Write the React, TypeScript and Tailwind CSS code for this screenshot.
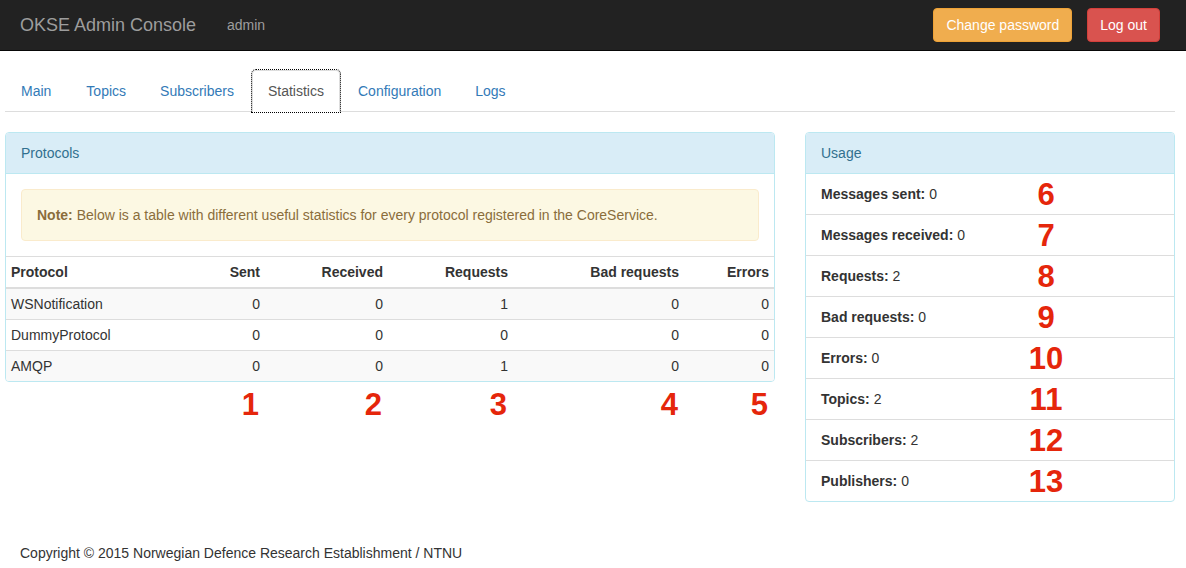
import React from "react";

const protocols = [
  { name: "WSNotification", sent: 0, received: 0, requests: 1, bad: 0, errors: 0 },
  { name: "DummyProtocol", sent: 0, received: 0, requests: 0, bad: 0, errors: 0 },
  { name: "AMQP", sent: 0, received: 0, requests: 1, bad: 0, errors: 0 },
];

const usage = [
  { label: "Messages sent:", value: 0, mark: "6" },
  { label: "Messages received:", value: 0, mark: "7" },
  { label: "Requests:", value: 2, mark: "8" },
  { label: "Bad requests:", value: 0, mark: "9" },
  { label: "Errors:", value: 0, mark: "10" },
  { label: "Topics:", value: 2, mark: "11" },
  { label: "Subscribers:", value: 2, mark: "12" },
  { label: "Publishers:", value: 0, mark: "13" },
];

const tabs = ["Main", "Topics", "Subscribers", "Statistics", "Configuration", "Logs"];

export default function App() {
  return (
    <div className="min-h-[568px] bg-white text-[14px] leading-5 text-[#333]" style={{ fontFamily: '"Liberation Sans", Arial, sans-serif' }}>
      {/* navbar */}
      <div className="flex h-[51px] items-center border-b border-[#080808] bg-[#222] pl-[20px] pr-[26px]">
        <span className="w-[207px] text-[18px] text-[#9d9d9d]">OKSE Admin Console</span>
        <span className="text-[#9d9d9d]">admin</span>
        <div className="ml-auto flex gap-[15px]">
          <button className="h-[34px] rounded-[4px] border border-[#eea236] bg-[#f0ad4e] px-[12px] text-white">Change password</button>
          <button className="h-[34px] rounded-[4px] border border-[#d43f3a] bg-[#d9534f] px-[12px] text-white">Log out</button>
        </div>
      </div>

      <div className="ml-[5px] w-[1170px]">
        {/* tabs */}
        <ul className="mt-[19px] flex border-b border-[#ddd]">
          {tabs.map((t, i) => (
            <li key={t} className={`-mb-px ${i === 0 ? "mr-[3px]" : "mr-[2px]"}`}>
              {t === "Statistics" ? (
                <span className="block rounded-t-[4px] border border-[#ddd] border-b-transparent bg-white px-[15px] py-[10px] text-[#555] outline-1 outline-dotted outline-black">
                  {t}
                </span>
              ) : (
                <span className="block border border-transparent px-[15px] py-[10px] text-[#337ab7]">{t}</span>
              )}
            </li>
          ))}
        </ul>

        <div className="mt-[20px] flex gap-[30px]">
          {/* protocols */}
          <div className="w-[770px]">
            <div className="overflow-hidden rounded-[4px] border border-[#bce8f1]">
              <div className="bg-[#d9edf7] px-[15px] py-[10px] text-[#31708f]">Protocols</div>
              <div className="border-t border-[#bce8f1] p-[15px]">
                <div className="rounded-[4px] border border-[#faebcc] bg-[#fcf8e3] p-[15px] text-[#8a6d3b]">
                  <b>Note:</b> Below is a table with different useful statistics for every protocol registered in the CoreService.
                </div>
              </div>
              <table className="w-full table-fixed border-t border-[#ddd]">
                <colgroup>
                  <col className="w-[180px]" />
                  <col className="w-[79px]" />
                  <col className="w-[123px]" />
                  <col className="w-[125px]" />
                  <col className="w-[171px]" />
                  <col className="w-[90px]" />
                </colgroup>
                <thead>
                  <tr className="border-b-2 border-[#ddd] font-bold">
                    <th className="p-[5px] text-left">Protocol</th>
                    <th className="p-[5px] text-right">Sent</th>
                    <th className="p-[5px] text-right">Received</th>
                    <th className="p-[5px] text-right">Requests</th>
                    <th className="whitespace-nowrap p-[5px] text-right">Bad requests</th>
                    <th className="p-[5px] text-right">Errors</th>
                  </tr>
                </thead>
                <tbody>
                  {protocols.map((p, i) => (
                    <tr key={p.name} className={`border-t border-[#ddd] first:border-t-0 ${i % 2 === 0 ? "bg-[#f9f9f9]" : ""}`}>
                      <td className="p-[5px]">{p.name}</td>
                      <td className="p-[5px] text-right">{p.sent}</td>
                      <td className="p-[5px] text-right">{p.received}</td>
                      <td className="p-[5px] text-right">{p.requests}</td>
                      <td className="p-[5px] text-right">{p.bad}</td>
                      <td className="p-[5px] text-right">{p.errors}</td>
                    </tr>
                  ))}
                </tbody>
              </table>
            </div>
            <div className="mt-[5px] flex text-[31px] font-bold leading-[36px] text-[#e5260b]">
              <div className="w-[259px] pr-[5px] text-right">1</div>
              <div className="w-[123px] pr-[5px] text-right">2</div>
              <div className="w-[125px] pr-[5px] text-right">3</div>
              <div className="w-[171px] pr-[5px] text-right">4</div>
              <div className="w-[90px] pr-[5px] text-right">5</div>
            </div>
          </div>

          {/* usage */}
          <div className="w-[370px] self-start overflow-hidden rounded-[4px] border border-[#bce8f1]">
            <div className="bg-[#d9edf7] px-[15px] py-[10px] text-[#31708f]">Usage</div>
            {usage.map((u, i) => (
              <div key={u.label} className={`flex items-center border-t px-[15px] py-[10px] ${i === 0 ? "border-[#bce8f1]" : "border-[#ddd]"}`}>
                <div className="w-[204px] flex-none">
                  <b>{u.label}</b> {u.value}
                </div>
                <div className="w-[42px] translate-y-[1px] text-center text-[31px] font-bold leading-5 text-[#e5260b]">{u.mark}</div>
              </div>
            ))}
          </div>
        </div>

        <footer className="mt-[41px] pl-[15px]">Copyright © 2015 Norwegian Defence Research Establishment / NTNU</footer>
      </div>
    </div>
  );
}
